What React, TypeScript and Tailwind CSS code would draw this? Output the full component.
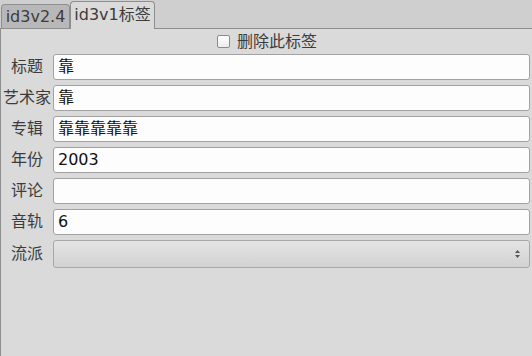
import React from "react";

const fields: { label: string; value: string }[] = [
  { label: "标题", value: "靠" },
  { label: "艺术家", value: "靠" },
  { label: "专辑", value: "靠靠靠靠靠" },
  { label: "年份", value: "2003" },
  { label: "评论", value: "" },
  { label: "音轨", value: "6" },
];

export default function App() {
  return (
    <div className="w-[532px] h-[356px] bg-[#cfcfcf] overflow-hidden flex flex-col font-['DejaVu_Sans','Noto_Sans_CJK_SC',sans-serif] text-[16px] leading-none">
      <div className="h-[28px] flex items-end pl-[1px] shrink-0">
        <div className="h-[24px] w-[69px] border border-b-0 border-[#8e8e8e] rounded-t-[4px] bg-[#b8b8b8] text-[#3c3c3c] flex items-center justify-center">
          id3v2.4
        </div>
        <div className="relative z-10 -mb-px h-[28px] w-[85px] border border-b-0 border-[#8e8e8e] rounded-t-[4px] bg-[#dadada] text-[#3c3c3c] flex items-center justify-center pb-[1px]">
          id3v1标签
        </div>
      </div>
      <div className="flex-1 border-t border-l border-[#8e8e8e] bg-[#dadada] flex flex-col">
        <div className="h-[25px] flex items-center justify-center gap-[7px] pl-[1px]">
          <div className="w-[13px] h-[13px] border border-[#8c8c8c] rounded-[2px] bg-gradient-to-b from-[#ffffff] to-[#ececec]" />
          <span className="text-[#3c3c3c]">删除此标签</span>
        </div>
        <div className="flex flex-col gap-[5px]">
          {fields.map((f) => (
            <div key={f.label} className="flex items-center h-[26px]">
              <div className="w-[52px] text-center text-[#3c3c3c]">{f.label}</div>
              <div className="flex-1 mr-[2px] h-[26px] border border-[#a2a2a2] rounded-[3px] bg-[#fdfdfd] flex items-center pl-[4px] text-[#111]">
                {f.value}
              </div>
            </div>
          ))}
          <div className="flex items-center h-[28px]">
            <div className="w-[52px] text-center text-[#3c3c3c]">流派</div>
            <div className="flex-1 mr-[2px] h-[28px] border border-[#a8a8a8] rounded-[3px] bg-gradient-to-b from-[#e4e4e4] to-[#d2d2d2] flex items-center justify-end pr-[8px]">
              <svg width="7" height="12" viewBox="0 0 7 12">
                <path d="M3.5 2 L6 5 L1 5 Z" fill="#555" />
                <path d="M1 7 L6 7 L3.5 10 Z" fill="#555" />
              </svg>
            </div>
          </div>
        </div>
      </div>
    </div>
  );
}
